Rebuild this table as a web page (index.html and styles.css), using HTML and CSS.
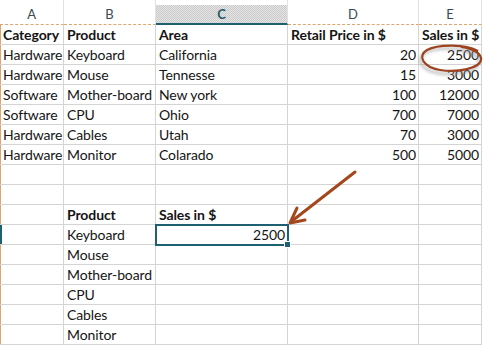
FILE: index.html
```html
<!DOCTYPE html>
<html>
<head>
<meta charset="utf-8">
<link rel="stylesheet" href="styles.css">
</head>
<body>
<div class="wrap">
  <div class="sheet">
    <div class="ch">A</div><div class="ch">B</div><div class="ch sel">C</div><div class="ch">D</div><div class="ch">E</div>

    <div class="c b first">Category</div><div class="c b">Product</div><div class="c b">Area</div><div class="c b">Retail Price in $</div><div class="c b">Sales in $</div>
    <div class="c first">Hardware</div><div class="c">Keyboard</div><div class="c">California</div><div class="c n">20</div><div class="c n">2500</div>
    <div class="c first">Hardware</div><div class="c">Mouse</div><div class="c">Tennesse</div><div class="c n">15</div><div class="c n">3000</div>
    <div class="c first">Software</div><div class="c">Mother-board</div><div class="c">New york</div><div class="c n">100</div><div class="c n">12000</div>
    <div class="c first">Software</div><div class="c">CPU</div><div class="c">Ohio</div><div class="c n">700</div><div class="c n">7000</div>
    <div class="c first">Hardware</div><div class="c">Cables</div><div class="c">Utah</div><div class="c n">70</div><div class="c n">3000</div>
    <div class="c first">Hardware</div><div class="c">Monitor</div><div class="c">Colarado</div><div class="c n">500</div><div class="c n">5000</div>
    <div class="c first"></div><div class="c"></div><div class="c"></div><div class="c"></div><div class="c"></div>
    <div class="c first"></div><div class="c"></div><div class="c"></div><div class="c"></div><div class="c"></div>
    <div class="c first"></div><div class="c b">Product</div><div class="c b">Sales in $</div><div class="c"></div><div class="c"></div>
    <div class="c first selrow"></div><div class="c">Keyboard</div><div class="c n active">2500<span class="handle"></span></div><div class="c"></div><div class="c"></div>
    <div class="c first"></div><div class="c">Mouse</div><div class="c"></div><div class="c"></div><div class="c"></div>
    <div class="c first"></div><div class="c">Mother-board</div><div class="c"></div><div class="c"></div><div class="c"></div>
    <div class="c first"></div><div class="c">CPU</div><div class="c"></div><div class="c"></div><div class="c"></div>
    <div class="c first"></div><div class="c">Cables</div><div class="c"></div><div class="c"></div><div class="c"></div>
    <div class="c first"></div><div class="c">Monitor</div><div class="c"></div><div class="c"></div><div class="c"></div>
  </div>

  <svg class="marks" width="483" height="347" viewBox="0 0 483 347">
    <defs>
      <filter id="soft" x="-20%" y="-50%" width="140%" height="200%">
        <feGaussianBlur stdDeviation="1.4"/>
      </filter>
    </defs>
    <!-- ring round the first sales figure -->
    <path d="M478 51 C466 44 438 44 427 50 C417 56 423 67 440 70 C458 73 480 68 481 60 C482 54 474 49 461 47"
          fill="none" stroke="#9a9a9a" stroke-width="3" opacity="0.55" filter="url(#soft)" transform="translate(-2 3)"/>
    <path d="M478 51 C466 44 438 44 427 50 C417 56 423 67 440 70 C458 73 480 68 481 60 C482 54 474 49 461 47"
          fill="none" stroke="#9c4420" stroke-width="2.2"/>
    <!-- pointer to the looked-up value -->
    <line x1="355" y1="172" x2="292" y2="221" stroke="#a3471c" stroke-width="3" stroke-linecap="round"/>
    <path d="M297 208 L290 223 L305 220" fill="none" stroke="#a3471c" stroke-width="3" stroke-linecap="round" stroke-linejoin="round"/>
  </svg>
</div>
</body>
</html>
```

FILE: styles.css
```css
html, body {
  margin: 0;
  padding: 0;
  background: #fff;
}

.wrap {
  position: relative;
  width: 483px;
  height: 347px;
  overflow: hidden;
}

.sheet {
  display: grid;
  grid-template-columns: 64px 92px 132px 131px 63px;
  grid-template-rows: 25px repeat(16, 20px);
  font-family: Lato, "Open Sans", sans-serif;
  font-size: 14px;
  letter-spacing: -0.1px;
  color: #151515;
}

/* column letters */
.ch {
  box-sizing: border-box;
  height: 25px;
  padding-top: 5px;
  line-height: 19px;
  text-align: center;
  font-size: 13px;
  color: #3a4a52;
  border-right: 1px solid #e2e2e2;
  border-bottom: 1px dashed #e0a46e;
}

.ch.sel {
  background-clip: content-box;
  background-color: #d8d8d8;
  background-image: repeating-conic-gradient(#cbcbcb 0 25%, #e4e4e4 0 50%);
  background-size: 2px 2px;
  background-origin: content-box;
  color: #1f5a6a;
  font-weight: bold;
  border-bottom: 2px solid #1f5f72;
}

/* cells */
.c {
  box-sizing: border-box;
  height: 20px;
  line-height: 20px;
  padding: 0 2px 0 3px;
  white-space: nowrap;
  overflow: visible;
  border-right: 1px solid #d4d4d4;
  border-bottom: 1px solid #d4d4d4;
}

.c.first {
  padding-left: 3px;
  box-shadow: inset 1px 0 0 #e0a46e;
}

.c.selrow {
  box-shadow: inset 2px 0 0 #1f5f72;
}

.c.b {
  font-weight: bold;
}

.c.n {
  text-align: right;
}

.c.active {
  position: relative;
  outline: 2px solid #1f5f72;
  outline-offset: -1px;
  z-index: 1;
}

.handle {
  position: absolute;
  right: -4px;
  bottom: -4px;
  width: 5px;
  height: 5px;
  background: #1f5f72;
  border: 1px solid #fff;
}

.marks {
  position: absolute;
  left: 0;
  top: 0;
  pointer-events: none;
  z-index: 2;
}
```
